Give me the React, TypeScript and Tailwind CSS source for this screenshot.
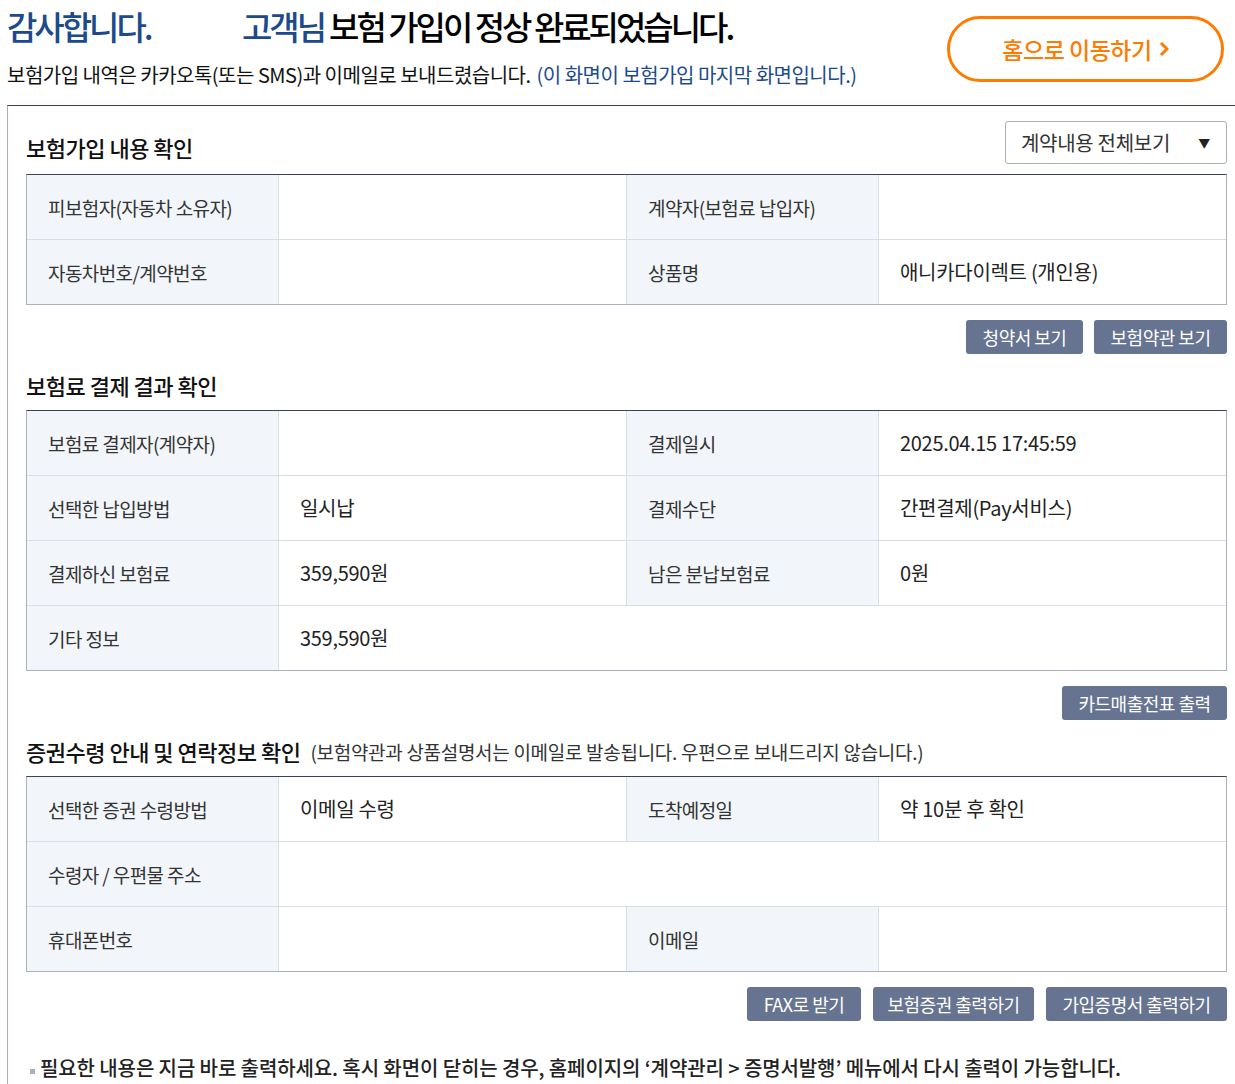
import React from "react";

type Cell = { label: string; value?: string; span?: boolean };

function InfoTable({ rows }: { rows: Cell[][] }) {
  return (
    <div className="border-t border-t-[#3a4253] border-x border-b border-x-[#a9b1bc] border-b-[#a9b1bc]">
      {rows.map((row, ri) => (
        <div
          key={ri}
          className={
            "grid grid-cols-[251px_348px_252px_1fr] " +
            (ri < rows.length - 1 ? "h-[65px] border-b border-[#d7dee6]" : "h-[64px]")
          }
        >
          {row.map((c, ci) => (
            <React.Fragment key={ci}>
              <div
                className={
                  "flex items-center pl-[21px] bg-[#f2f6fa] text-[#333] " +
                  (ci > 0 ? "border-l border-[#d7dee6]" : "")
                }
              >
                {c.label}
              </div>
              <div
                className={
                  "flex items-center pl-[21px] text-[20px] tracking-[-0.3px] text-[#222] border-l border-[#d7dee6] " +
                  (c.span ? "col-span-3" : "")
                }
              >
                {c.value ?? ""}
              </div>
            </React.Fragment>
          ))}
        </div>
      ))}
    </div>
  );
}

function Btn({ children, w }: { children: React.ReactNode; w: string }) {
  return (
    <button
      className={
        "h-[34px] rounded-[3px] bg-[#667491] text-white text-[18px] tracking-[-0.5px] flex items-center justify-center " +
        w
      }
    >
      {children}
    </button>
  );
}

export default function App() {
  return (
    <div
      className="bg-white w-[1235px] min-h-[1084px] text-[19px] tracking-[-0.6px] leading-none"
      style={{ fontFamily: '"Noto Sans CJK KR", "Noto Sans", sans-serif' }}
    >
      {/* Header */}
      <div className="h-[105px] flex justify-between pl-[7px] pr-[11px]">
        <div className="pt-[8px]">
          <div className="flex items-center h-[36px] text-[33px] tracking-[-3px] font-medium">
            <span className="text-[#1c4a8c] w-[235px]">감사합니다.</span>
            <span className="text-[#1c4a8c]">고객님</span>
            <span className="text-black ml-[5px]">보험 가입이 정상 완료되었습니다.</span>
          </div>
          <div className="mt-[20px] h-[22px] flex items-center text-[20px] tracking-[-0.5px] text-[#111]">
            <span>보험가입 내역은 카카오톡(또는 SMS)과 이메일로 보내드렸습니다.</span>
            <span className="text-[#1c4a8c] ml-[6px]">(이 화면이 보험가입 마지막 화면입니다.)</span>
          </div>
        </div>
        <div className="pt-[16px]">
          <button className="w-[277px] h-[66px] rounded-full border-[3px] border-[#ff7b00] text-[#ff7b00] text-[23px] tracking-[-0.5px] font-medium flex items-center justify-center gap-[7px]">
            <span>홈으로 이동하기</span>
            <svg width="10" height="16" viewBox="0 0 10 16">
              <path d="M2 2 L8 8 L2 14" fill="none" stroke="#ff7b00" strokeWidth="3" />
            </svg>
          </button>
        </div>
      </div>

      {/* Frame */}
      <div className="ml-[7px] border-l border-l-[#a9b1bc] border-t border-t-[#3d4553] pl-[18px] pr-[8px] pb-[12px]">
        {/* Section 1 */}
        <div className="flex items-end justify-between pt-[15px] mb-[10px]">
          <h2 className="text-[22px] font-medium text-[#111] tracking-[-0.5px] pb-[6px]">보험가입 내용 확인</h2>
          <div className="w-[222px] h-[43px] border border-[#a9b1bc] rounded-[3px] flex items-center justify-between pl-[15px] pr-[16px] text-[20px] tracking-[-0.3px] text-[#333]">
            <span>계약내용 전체보기</span>
            <span className="text-[12px] text-[#222]">▼</span>
          </div>
        </div>
        <InfoTable
          rows={[
            [{ label: "피보험자(자동차 소유자)" }, { label: "계약자(보험료 납입자)" }],
            [{ label: "자동차번호/계약번호" }, { label: "상품명", value: "애니카다이렉트 (개인용)" }],
          ]}
        />
        <div className="flex justify-end gap-[11px] mt-[15px]">
          <Btn w="w-[117px]">청약서 보기</Btn>
          <Btn w="w-[133px]">보험약관 보기</Btn>
        </div>

        {/* Section 2 */}
        <h2 className="text-[22px] font-medium text-[#111] tracking-[-0.5px] mt-[20px] mb-[14px] h-[22px] flex items-center">보험료 결제 결과 확인</h2>
        <InfoTable
          rows={[
            [{ label: "보험료 결제자(계약자)" }, { label: "결제일시", value: "2025.04.15 17:45:59" }],
            [{ label: "선택한 납입방법", value: "일시납" }, { label: "결제수단", value: "간편결제(Pay서비스)" }],
            [{ label: "결제하신 보험료", value: "359,590원" }, { label: "남은 분납보험료", value: "0원" }],
            [{ label: "기타 정보", value: "359,590원", span: true }],
          ]}
        />
        <div className="flex justify-end mt-[15px]">
          <Btn w="w-[165px]">카드매출전표 출력</Btn>
        </div>

        {/* Section 3 */}
        <div className="flex items-center mt-[20px] mb-[14px] h-[22px]">
          <h2 className="text-[22px] font-medium text-[#111] tracking-[-0.5px]">증권수령 안내 및 연락정보 확인</h2>
          <span className="ml-[10px] text-[19px] text-[#333] tracking-[-0.3px]">(보험약관과 상품설명서는 이메일로 발송됩니다. 우편으로 보내드리지 않습니다.)</span>
        </div>
        <InfoTable
          rows={[
            [{ label: "선택한 증권 수령방법", value: "이메일 수령" }, { label: "도착예정일", value: "약 10분 후 확인" }],
            [{ label: "수령자 / 우편물 주소", span: true }],
            [{ label: "휴대폰번호" }, { label: "이메일" }],
          ]}
        />
        <div className="flex justify-end gap-[12px] mt-[15px]">
          <Btn w="w-[114px]">FAX로 받기</Btn>
          <Btn w="w-[161px]">보험증권 출력하기</Btn>
          <Btn w="w-[181px]">가입증명서 출력하기</Btn>
        </div>

        <div className="mt-[35px] flex items-center h-[24px] text-[20px] font-medium text-[#222] tracking-[-0.1px]">
          <span className="w-[5px] h-[5px] bg-[#a9b1bc] ml-[4px] mr-[5px] mt-[6px]"></span>
          <span>필요한 내용은 지금 바로 출력하세요. 혹시 화면이 닫히는 경우, 홈페이지의 ‘계약관리 &gt; 증명서발행’ 메뉴에서 다시 출력이 가능합니다.</span>
        </div>
      </div>
    </div>
  );
}
